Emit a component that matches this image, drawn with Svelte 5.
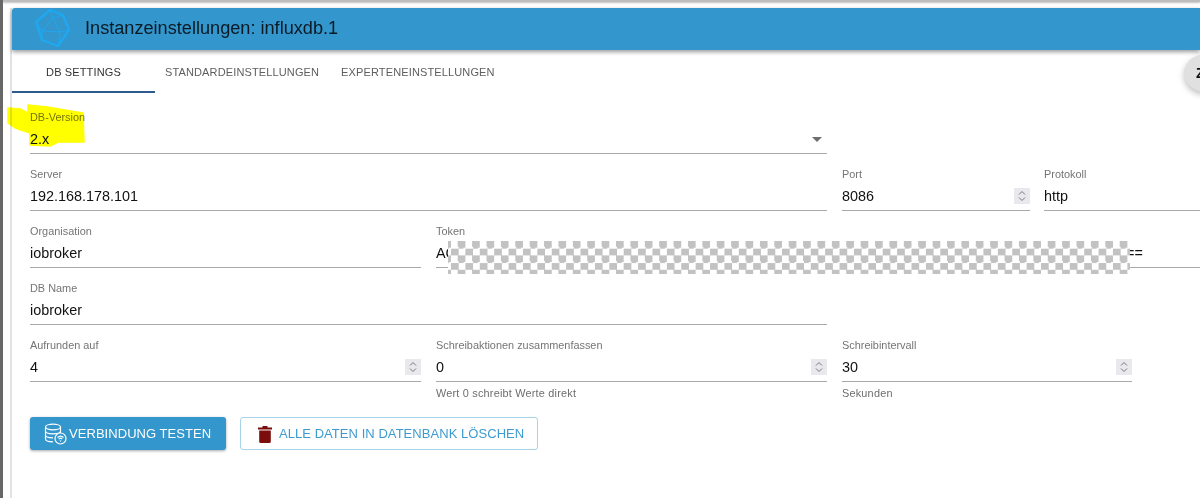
<script>
</script>

{#snippet spinner()}
  <span class="spin">
    <svg width="16" height="16" viewBox="0 0 16 16" fill="none" stroke="#77777c" stroke-width="1"><path d="M5 6.500 8 3.500 11 6.500M5 9.500 8 12.500 11 9.500"/></svg>
  </span>
{/snippet}

{#snippet field(label, value, cls, hasSpin = false, helper = '')}
  <div class="field {cls}">
    <span class="label">{label}</span>
    <div class="control">
      <span class="value">{value}</span>
      {#if hasSpin}{@render spinner()}{/if}
    </div>
    {#if helper}<span class="helper">{helper}</span>{/if}
  </div>
{/snippet}

<div class="page">
  <div class="topband"></div>
  <div class="panel">
    <header class="bar">
      <svg class="logo" width="37" height="39" viewBox="-1 -1 37 39" fill="none" stroke="#1fa8f0" stroke-linejoin="round">
        <path stroke-width="2.400" d="M15 0 28 5 34 20 23 36 7 30 1 12Z"/>
        <path stroke-width="1" d="M15 0 18 8 28 5M18 8 25 22 34 20M25 22 23 36M7 21 25 22M7 21 18 8M7 21 1 12M7 21 7 30"/>
      </svg>
      <h1>Instanzeinstellungen: influxdb.1</h1>
    </header>
    <nav class="tabs">
      <span class="tab active">DB SETTINGS</span>
      <span class="tab second">STANDARDEINSTELLUNGEN</span>
      <span class="tab third">EXPERTENEINSTELLUNGEN</span>
    </nav>
    <form class="form">
      <div class="row">
        <div class="field w-wide">
          <span class="label">DB-Version</span>
          <div class="control">
            <span class="value">2.x</span>
            <svg class="caret" width="10" height="5" viewBox="0 0 10 5"><path d="M0 0h10L5 5Z" fill="#6e6e6e"/></svg>
          </div>
        </div>
      </div>
      <div class="row">
        {@render field('Server', '192.168.178.101', 'w-wide')}
        {@render field('Port', '8086', 'w-port', true)}
        {@render field('Protokoll', 'http', 'w-rest')}
      </div>
      <div class="row">
        {@render field('Organisation', 'iobroker', 'w-half')}
        {@render field('Token', 'AC', 'w-token')}
      </div>
      <div class="row">
        {@render field('DB Name', 'iobroker', 'w-wide')}
      </div>
      <div class="row">
        {@render field('Aufrunden auf', '4', 'w-half', true)}
        {@render field('Schreibaktionen zusammenfassen', '0', 'w-half', true, 'Wert 0 schreibt Werte direkt')}
        {@render field('Schreibintervall', '30', 'w-interval', true, 'Sekunden')}
      </div>
      <div class="actions">
        <button type="button" class="btn primary">
          <svg width="23" height="22" viewBox="0 0 23 22" fill="none" stroke="#fff" stroke-width="1.200">
            <ellipse cx="9" cy="4" rx="7.500" ry="2.800"/>
            <path d="M1.500 4v12c0 1.600 3.300 2.800 7.500 2.800M16.500 4v6M1.500 8c0 1.600 3.300 2.800 7.500 2.800s7.500-1.200 7.500-2.800M1.500 12c0 1.600 3.300 2.800 7.500 2.800"/>
            <circle cx="16.500" cy="15.500" r="5.500" fill="#3396cc"/>
            <path d="M13.500 14.500a4.500 4.500 0 0 1 6 0M14.800 16a2.500 2.500 0 0 1 3.400 0"/>
            <path d="M16.500 19l-1-1.500h2Z" fill="#fff" stroke="none"/>
          </svg>
          <span>VERBINDUNG TESTEN</span>
        </button>
        <button type="button" class="btn outlined">
          <svg width="14" height="18" viewBox="0 0 14 18"><path fill="#7b0d0d" d="M0 2.500h4.500V1h5v1.500H14v2H0ZM1.200 5.500h11.600V16.500a1.500 1.500 0 0 1-1.500 1.500H2.700a1.500 1.500 0 0 1-1.500-1.500Z"/></svg>
          <span>ALLE DATEN IN DATENBANK LÖSCHEN</span>
        </button>
      </div>
    </form>
  </div>
  <span class="token-end">==</span>
  <div class="checker"></div>
  <div class="fab"><b>Z</b></div>
  <svg class="marker" width="90" height="50" viewBox="0 0 90 50"><path fill="#ffff00" stroke="#ffff00" stroke-width="1.500" stroke-linejoin="round" d="M8 6 20 7 28 11 28 3 47 5 83 11 84 40 58 40 50 44 30 43 30 31 15 26 8 21Z"/></svg>
</div>

<style>
  :global(body) { margin: 0; background: #fff; }
  .page {
    position: relative;
    width: 1200px;
    height: 498px;
    overflow: hidden;
    background: #fff;
    font-family: "Liberation Sans", Arial, sans-serif;
    box-sizing: border-box;
    border-left: 3px solid #676767;
    padding: 8px 0 0 7px;
  }
  .topband {
    position: absolute; left: 0; right: 0; top: 0; height: 2px;
    background: #bdbdbd;
    box-shadow: 0 1px 2px rgba(0,0,0,.25);
  }
  .panel { border-left: 2px solid #e2e2e2; height: 490px; box-sizing: border-box; }
  .bar {
    height: 42px;
    background: #3396cc;
    border-top-left-radius: 3px;
    display: flex;
    align-items: center;
    box-shadow: 0 2px 4px rgba(0,0,0,.4);
    position: relative;
    padding-left: 22px;
  }
  .logo { flex: none; margin-top: -1px; }
  h1 {
    margin: -2px 0 0 14px;
    font-size: 18.150px;
    font-weight: 400;
    color: #0b1a24;
    line-height: 1;
  }
  .tabs { display: flex; height: 43px; }
  .tab {
    font-size: 11px;
    letter-spacing: .13px;
    color: #5e5e5e;
    line-height: 43px;
    padding-top: 1px;
    box-sizing: border-box;
    white-space: nowrap;
  }
  .active {
    width: 143px;
    text-align: center;
    color: #333;
    border-bottom: 2px solid #2f5a8f;
    height: 43px;
  }
  .second { margin-left: 10px; }
  .third { margin-left: 22px; }
  .form { padding: 16px 0 0 18px; }
  .row { display: flex; height: 57px; }
  .field { flex: none; box-sizing: border-box; position: relative; height: 57px; }
  .w-wide, .row > .w-half { margin-right: 15px; }
  .w-wide { width: 797px; }
  .w-half { width: 391px; }
  .w-port { width: 188px; margin-right: 14px; }
  .w-rest { width: 160px; }
  .w-token { width: 770px; }
  .w-interval { width: 290px; }
  .label {
    display: block;
    font-size: 10.900px;
    line-height: 14px;
    color: #757575;
    padding-top: 1px;
  }
  .control {
    height: 30px;
    box-sizing: border-box;
    border-bottom: 1px solid #a9a9a9;
    display: flex;
    align-items: center;
    justify-content: space-between;
    padding-top: 1px;
  }
  .value { font-size: 14.400px; color: #111; }
  .caret { margin-right: 5px; }
  .spin {
    width: 16px; height: 16px;
    background: #e9e9ed;
    display: flex;
  }
  .helper {
    display: block;
    font-size: 10.900px;
    letter-spacing: .2px;
    line-height: 14px;
    color: #6e6e6e;
    margin-top: 4px;
  }
  .actions { display: flex; gap: 14px; margin-top: 23px; }
  .btn {
    height: 33px;
    box-sizing: border-box;
    border-radius: 3px;
    font: 400 13px "Liberation Sans", Arial, sans-serif;
    letter-spacing: .05px;
    display: flex;
    align-items: center;
    padding: 0;
  }
  .primary {
    width: 196px;
    background: #3396cc;
    color: #fff;
    border: 0;
    padding-left: 14px;
    gap: 2px;
    box-shadow: 0 1px 3px rgba(0,0,0,.35);
  }
  .outlined {
    width: 298px;
    background: #fff;
    color: #3d9bd0;
    border: 1px solid #a9d3ea;
    padding-left: 17px;
    gap: 7px;
  }
  .checker {
    position: absolute;
    left: 445px; top: 241px;
    width: 682px; height: 33px;
    background: repeating-conic-gradient(#c2c2c2 0 25%, #fff 0 50%) 3px 0 / 14.400px 14.400px;
  }
  .token-end {
    position: absolute; left: 1123px; top: 245px;
    font-size: 14.400px; color: #111;
  }
  .fab {
    position: absolute;
    left: 1181px; top: 54px;
    width: 44px; height: 38px;
    border-radius: 50%;
    background: #e0e0e0;
    box-shadow: 0 3px 6px rgba(0,0,0,.25);
    font-size: 14px;
    line-height: 38px;
    padding-left: 12px;
    box-sizing: border-box;
    color: #111;
  }
  .marker {
    position: absolute;
    left: -3px; top: 102px;
    mix-blend-mode: multiply;
  }
</style>
